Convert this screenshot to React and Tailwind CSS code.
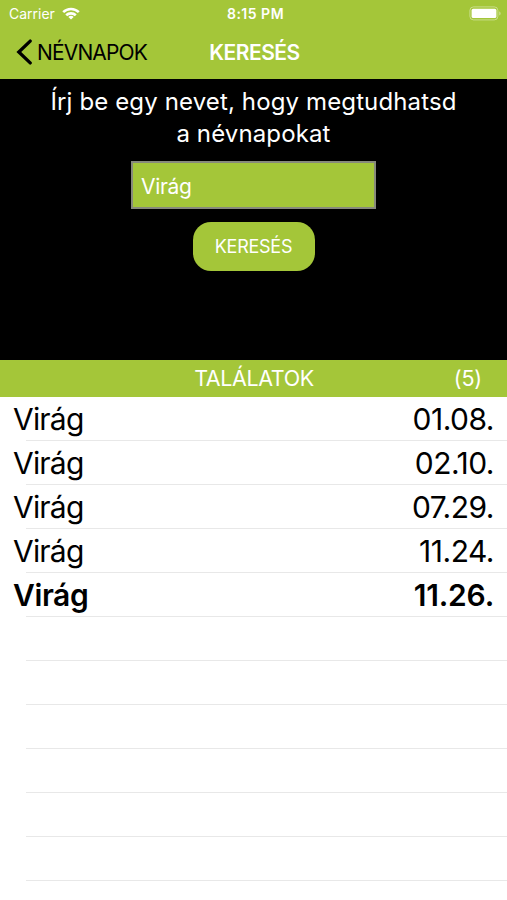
const results = [
  { name: 'Virág', date: '01.08.' },
  { name: 'Virág', date: '02.10.' },
  { name: 'Virág', date: '07.29.' },
  { name: 'Virág', date: '11.24.' },
  { name: 'Virág', date: '11.26.', bold: true },
];
const emptyRows = [0, 1, 2, 3, 4, 5, 6];

function WifiIcon() {
  return (
    <svg className="ml-[7px] h-[13px] w-[18px]" viewBox="0 0 18 13" fill="none" stroke="#fff" strokeWidth="2.6">
      <path d="M1.2 5.1a11.2 11.2 0 0 1 15.6 0" />
      <path d="M4.2 8.3a6.9 6.9 0 0 1 9.6 0" />
      <path d="M9 12.6 6.3 10a3.9 3.9 0 0 1 5.4 0Z" fill="#fff" stroke="none" />
    </svg>
  );
}

function BatteryIcon() {
  return (
    <svg className="h-[15px] w-[33px]" viewBox="0 0 33 15" fill="none">
      <rect x="0.9" y="0.9" width="28" height="13" rx="3.6" stroke="#fff" strokeOpacity="0.4" strokeWidth="1" />
      <rect x="2.6" y="2.8" width="24.8" height="9.2" rx="1.6" fill="#fff" />
      <path d="M30.3 5.2c1.7.7 1.7 3.7 0 4.4Z" fill="#fff" fillOpacity="0.5" />
    </svg>
  );
}

function StatusBar() {
  return (
    <div className="grid h-[27px] grid-cols-3 items-center pl-[9px] pr-[5px] text-[14px] leading-[27px] text-white">
      <div className="flex items-center">
        <span className="tracking-[0px]">Carrier</span>
        <WifiIcon />
      </div>
      <span className="text-center font-semibold tracking-[0.5px]">8:15 PM</span>
      <div className="flex justify-end">
        <BatteryIcon />
      </div>
    </div>
  );
}

function NavBar() {
  return (
    <div className="grid h-[50px] grid-cols-[1fr_auto_1fr] items-center pl-[16px] pr-[14px]">
      <div className="flex items-center">
        <svg className="h-[26px] w-[17px]" viewBox="0 0 17 26" fill="none" stroke="#000" strokeWidth="3.3" strokeLinecap="round">
          <path d="M14.2 2.1 2.8 13l11.4 10.9" />
        </svg>
        <span className="ml-[4px] text-[21px] leading-none tracking-[-0.85px] text-black">NÉVNAPOK</span>
      </div>
      <span className="text-[21px] font-semibold leading-none tracking-[-0.5px] text-white">KERESÉS</span>
      <span />
    </div>
  );
}

export default function App() {
  return (
    <div className="flex h-[900px] w-[507px] flex-col overflow-hidden bg-white font-['Inter',sans-serif]">
      <header className="h-[79px] shrink-0 bg-[#a4c639]">
        <StatusBar />
        <NavBar />
      </header>
      <section className="flex h-[281px] shrink-0 flex-col items-center bg-black pt-[7px] text-white">
        <p className="text-center text-[24px] leading-[32px] tracking-[0.13px]">
          Írj be egy nevet, hogy megtudhatsd
          <br />a névnapokat
        </p>
        <div className="mt-[11px] flex h-[48px] w-[245px] items-center border-2 border-[#87897c] bg-[#a4c639] pl-[8px] pt-[3px] text-[21px] tracking-[-0.3px]">
          Virág
        </div>
        <button className="mt-[13px] h-[49px] w-[122px] rounded-[18px] bg-[#a4c639] text-[18px] tracking-[-0.25px]">
          KERESÉS
        </button>
      </section>
      <div className="grid h-[37px] shrink-0 grid-cols-[1fr_auto_1fr] items-center bg-[#a4c639] pl-[26px] pr-[25px] text-[21.5px] text-white">
        <span />
        <span className="tracking-[-0.4px]">TALÁLATOK</span>
        <span className="text-right tracking-[-0.2px]">(5)</span>
      </div>
      <ul className="flex flex-col text-[30px] leading-[43px] text-black">
        {results.map((r) => (
          <li key={r.date} className="flex h-[44px] shrink-0 flex-col">
            <div className={'flex h-[43px] justify-between pl-[13px] pr-[13px] pt-[1px] ' + (r.bold ? 'font-semibold' : '')}>
              <span className={r.bold ? 'tracking-[-0.4px]' : 'tracking-[-0.8px]'}>{r.name}</span>
              <span className={r.bold ? 'tracking-[-0.2px]' : 'tracking-[-0.5px]'}>{r.date}</span>
            </div>
            <div className="ml-[26px] h-px bg-[#e8e8e8]" />
          </li>
        ))}
        {emptyRows.map((i) => (
          <li key={i} className="flex h-[44px] shrink-0 flex-col pt-[43px]">
            <div className="ml-[26px] h-px bg-[#e8e8e8]" />
          </li>
        ))}
      </ul>
    </div>
  );
}
